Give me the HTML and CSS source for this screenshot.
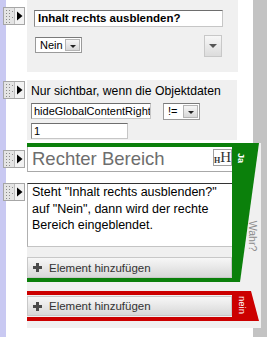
FILE: index.html
```html
<!DOCTYPE html>
<html lang="de">
<head>
    <meta charset="UTF-8">
    <title>Bedingung - Rechter Bereich</title>
    <link rel="stylesheet" href="styles.css">
</head>
<body>
    <!-- Frage -->
    <div class="row">
        <span class="grip grip-q">
            <svg width="22" height="18" viewBox="0 0 22 18"><rect x="0.5" y="0.5" width="21" height="17" fill="#e4e4e4" stroke="#a6a6a6"/><rect x="12" y="1" width="9" height="16" fill="#f2f2f2"/><line x1="11.5" y1="1" x2="11.5" y2="17" stroke="#bdbdbd"/><g fill="#8a8a8a"><rect x="3" y="3" width="1" height="1"/><rect x="6" y="3" width="1" height="1"/><rect x="3" y="6" width="1" height="1"/><rect x="6" y="6" width="1" height="1"/><rect x="3" y="9" width="1" height="1"/><rect x="6" y="9" width="1" height="1"/><rect x="3" y="12" width="1" height="1"/><rect x="6" y="12" width="1" height="1"/><rect x="3" y="15" width="1" height="1"/><rect x="6" y="15" width="1" height="1"/><rect x="9" y="4" width="1" height="1"/><rect x="9" y="10" width="1" height="1"/></g><path d="M14 4.5 L19.5 9 L14 13.5 Z" fill="#000"/></svg>
        </span>
        <div class="panel panel-question">
            <div class="field field-title">Inhalt rechts ausblenden?</div>
            <div class="question-line">
                <div class="select select-answer">
                    <span class="select-value">Nein</span>
                    <span class="select-btn"><i class="tri"></i></span>
                </div>
                <span class="drop-btn"><i class="tri-big"></i></span>
            </div>
        </div>
    </div>

    <!-- Sichtbarkeit -->
    <div class="row row-visibility">
        <span class="grip grip-v">
            <svg width="22" height="18" viewBox="0 0 22 18"><rect x="0.5" y="0.5" width="21" height="17" fill="#e4e4e4" stroke="#a6a6a6"/><rect x="12" y="1" width="9" height="16" fill="#f2f2f2"/><line x1="11.5" y1="1" x2="11.5" y2="17" stroke="#bdbdbd"/><g fill="#8a8a8a"><rect x="3" y="3" width="1" height="1"/><rect x="6" y="3" width="1" height="1"/><rect x="3" y="6" width="1" height="1"/><rect x="6" y="6" width="1" height="1"/><rect x="3" y="9" width="1" height="1"/><rect x="6" y="9" width="1" height="1"/><rect x="3" y="12" width="1" height="1"/><rect x="6" y="12" width="1" height="1"/><rect x="3" y="15" width="1" height="1"/><rect x="6" y="15" width="1" height="1"/><rect x="9" y="4" width="1" height="1"/><rect x="9" y="10" width="1" height="1"/></g><path d="M14 4.5 L19.5 9 L14 13.5 Z" fill="#000"/></svg>
        </span>
        <div class="panel panel-visibility">
            <div class="vis-label">Nur sichtbar, wenn die Objektdaten</div>
            <div class="vis-line">
                <div class="field field-key">hideGlobalContentRight</div>
                <div class="select select-op">
                    <span class="select-value">!=</span>
                    <span class="select-btn"><i class="tri"></i></span>
                </div>
            </div>
            <div class="field field-val">1</div>
        </div>
    </div>

    <!-- Bedingung -->
    <div class="cond">
        <div class="branch branch-yes">
            <div class="items">
                <div class="row row-heading">
                    <span class="grip grip-inner">
                        <svg width="22" height="18" viewBox="0 0 22 18"><rect x="0.5" y="0.5" width="21" height="17" fill="#e4e4e4" stroke="#a6a6a6"/><rect x="12" y="1" width="9" height="16" fill="#f2f2f2"/><line x1="11.5" y1="1" x2="11.5" y2="17" stroke="#bdbdbd"/><g fill="#8a8a8a"><rect x="3" y="3" width="1" height="1"/><rect x="6" y="3" width="1" height="1"/><rect x="3" y="6" width="1" height="1"/><rect x="6" y="6" width="1" height="1"/><rect x="3" y="9" width="1" height="1"/><rect x="6" y="9" width="1" height="1"/><rect x="3" y="12" width="1" height="1"/><rect x="6" y="12" width="1" height="1"/><rect x="3" y="15" width="1" height="1"/><rect x="6" y="15" width="1" height="1"/><rect x="9" y="4" width="1" height="1"/><rect x="9" y="10" width="1" height="1"/></g><path d="M14 4.5 L19.5 9 L14 13.5 Z" fill="#000"/></svg>
                    </span>
                    <div class="heading">
                        <span class="heading-text">Rechter Bereich</span>
                        <span class="h-icon"><span class="h-small">H</span><span class="h-big">H</span></span>
                    </div>
                </div>
                <div class="row row-text">
                    <span class="grip grip-inner grip-text">
                        <svg width="22" height="18" viewBox="0 0 22 18"><rect x="0.5" y="0.5" width="21" height="17" fill="#e4e4e4" stroke="#a6a6a6"/><rect x="12" y="1" width="9" height="16" fill="#f2f2f2"/><line x1="11.5" y1="1" x2="11.5" y2="17" stroke="#bdbdbd"/><g fill="#8a8a8a"><rect x="3" y="3" width="1" height="1"/><rect x="6" y="3" width="1" height="1"/><rect x="3" y="6" width="1" height="1"/><rect x="6" y="6" width="1" height="1"/><rect x="3" y="9" width="1" height="1"/><rect x="6" y="9" width="1" height="1"/><rect x="3" y="12" width="1" height="1"/><rect x="6" y="12" width="1" height="1"/><rect x="3" y="15" width="1" height="1"/><rect x="6" y="15" width="1" height="1"/><rect x="9" y="4" width="1" height="1"/><rect x="9" y="10" width="1" height="1"/></g><path d="M14 4.5 L19.5 9 L14 13.5 Z" fill="#000"/></svg>
                    </span>
                    <div class="textbox">Steht "Inhalt rechts ausblenden?" auf "Nein", dann wird der rechte Bereich eingeblendet.</div>
                </div>
            </div>
            <div class="add">
                <div class="add-btn"><span class="plus"></span>Element hinzufügen</div>
            </div>
        </div>

        <div class="branch branch-no">
            <div class="add">
                <div class="add-btn"><span class="plus"></span>Element hinzufügen</div>
            </div>
        </div>

        <!-- Ja / Nein Reiter -->
        <svg class="cond-side" width="29" height="185" viewBox="0 0 29 185">
            <polygon points="0,0 27,0 8,139 0,139" fill="#0b800b"/>
            <polygon points="0,148 19,148 27,178 0,178" fill="#cc0000"/>
            <text x="6" y="15" fill="#fff" font-size="9" font-weight="bold" font-family="Liberation Sans, Arial, sans-serif" transform="rotate(90 6 15)" text-anchor="middle">Ja</text>
            <text x="17" y="93" fill="#8c8c8c" font-size="10.5" font-family="Liberation Sans, Arial, sans-serif" transform="rotate(90 17 93)" text-anchor="middle">Wahr?</text>
            <text x="6.5" y="162" fill="#fff" font-size="9.5" font-family="Liberation Sans, Arial, sans-serif" transform="rotate(90 6.5 162)" text-anchor="middle">nein</text>
        </svg>
    </div>
</body>
</html>
```

FILE: styles.css
```css
* {
    box-sizing: border-box;
}
body {
    margin: 0;
    width: 267px;
    height: 337px;
    overflow: hidden;
    font-family: "Liberation Sans", Arial, sans-serif;
    color: #000;
    background: linear-gradient(to right, #c9c9f2 0, #c9c9f2 6px, #fff 6px, #fff 253px, #c3c3c3 253px);
}
.row {
    display: flex;
    align-items: flex-start;
}
.grip {
    flex: none;
    width: 27px;
    padding-left: 3px;
    display: flex;
}
.grip svg {
    display: block;
}
.grip-q {
    padding-top: 7px;
}
.grip-v {
    padding-top: 1px;
}
.grip-inner {
    margin-left: -27px;
    padding-top: 3px;
}
.grip-text {
    padding-top: 0;
}
.panel {
    background: #f0f0f0;
    width: 211px;
}

/* Frage */
.panel-question {
    height: 72px;
    padding: 10px 16px 0 7px;
}
.field {
    background: #fff;
    border: 1px solid #c6c6c6;
    border-top-color: #6e6e6e;
    border-left-color: #8a8a8a;
    white-space: nowrap;
    overflow: hidden;
}
.field-title {
    width: 189px;
    height: 17px;
    padding-left: 3px;
    font-size: 11.5px;
    font-weight: bold;
    line-height: 15px;
}
.question-line {
    display: flex;
    justify-content: space-between;
    align-items: flex-start;
    margin-top: 8px;
}
.select {
    display: flex;
    align-items: stretch;
    background: #fff;
    border: 1px solid #9a9a9a;
    border-top-color: #7a7a7a;
    font-size: 11px;
}
.select-value {
    flex: 1;
    padding-left: 4px;
    line-height: 14px;
}
.select-btn {
    width: 15px;
    margin: 1px;
    border: 1px solid #b4b4b4;
    background: linear-gradient(#f6f6f6, #d8d8d8);
    display: flex;
    align-items: center;
    justify-content: center;
}
.tri {
    width: 0;
    height: 0;
    border-left: 3px solid transparent;
    border-right: 3px solid transparent;
    border-top: 3px solid #222;
    margin-top: 2px;
}
.select-answer {
    width: 47px;
    height: 16px;
    margin: 2px 0 0 1px;
}
.drop-btn {
    width: 18px;
    height: 22px;
    border: 1px solid #c8c8c8;
    background: linear-gradient(#f7f7f7, #dcdcdc);
    display: flex;
    align-items: center;
    justify-content: center;
}
.tri-big {
    width: 0;
    height: 0;
    border-left: 4px solid transparent;
    border-right: 4px solid transparent;
    border-top: 4px solid #555;
}

/* Sichtbarkeit */
.row-visibility {
    margin-top: 8px;
}
.panel-visibility {
    height: 60px;
    padding: 3px 0 0 4px;
    width: 210px;
}
.vis-label {
    font-size: 12.2px;
    line-height: 17px;
    white-space: nowrap;
}
.vis-line {
    display: flex;
    align-items: flex-start;
    margin-top: 3px;
}
.field-key,
.field-val {
    height: 16px;
    font-size: 11px;
    line-height: 14px;
    padding-left: 2px;
}
.field-key {
    width: 120px;
}
.select-op {
    width: 37px;
    height: 17px;
    margin-left: 12px;
}
.field-val {
    width: 97px;
    margin-top: 3px;
}

/* Bedingung */
.cond {
    position: relative;
    margin: 3px 0 0 27px;
    width: 234px;
    height: 185px;
    background: #f0f0f0;
}
.cond-side {
    position: absolute;
    top: 0;
    right: 0;
}
.branch {
    width: 205px;
    border-top: 4px solid;
    border-bottom: 4px solid;
}
.branch-yes {
    border-color: #0b800b;
}
.branch-no {
    border-color: #cc0000;
    margin-top: 9px;
}
.items {
    background: #fff;
}
.heading {
    width: 205px;
    height: 25px;
    border-left: 1px solid #b0b0b0;
    border-bottom: 1px solid #a8a8a8;
    display: flex;
    justify-content: space-between;
    align-items: flex-start;
}
.heading-text {
    padding-left: 4px;
    font-size: 18.5px;
    line-height: 24px;
    color: #6e6e6e;
    white-space: nowrap;
}
.h-icon {
    width: 19px;
    height: 17px;
    margin-top: 2px;
    border: 1px solid #a0a0a0;
    background: #fff;
    display: flex;
    align-items: flex-end;
    justify-content: center;
    font-family: "Liberation Serif", "Times New Roman", serif;
    color: #333;
}
.h-small {
    font-size: 8px;
    font-weight: bold;
    line-height: 9px;
}
.h-big {
    font-size: 15px;
    line-height: 15px;
}
.row-text {
    margin-top: 11px;
}
.textbox {
    width: 205px;
    height: 64px;
    border-top: 1px solid #333;
    border-left: 1px solid #b0b0b0;
    border-bottom: 1px solid #c4c4c4;
    padding: 0 0 0 4px;
    font-size: 12.5px;
    line-height: 16.7px;
}
.add {
    background: #f0f0f0;
    padding-top: 10px;
}
.branch-no .add {
    padding: 1px 0;
}
.add-btn {
    height: 21px;
    border: 1px solid #c8c8c8;
    background: linear-gradient(#f7f7f7, #d8d8d8);
    display: flex;
    align-items: center;
    padding-left: 5px;
    font-size: 11.5px;
    color: #333;
}
.branch-no .add-btn {
    height: 20px;
}
.plus {
    position: relative;
    width: 9px;
    height: 9px;
    margin-right: 7px;
    background: linear-gradient(#4a4a4a, #4a4a4a) center / 9px 3px no-repeat,
                linear-gradient(#4a4a4a, #4a4a4a) center / 3px 9px no-repeat;
}
```
